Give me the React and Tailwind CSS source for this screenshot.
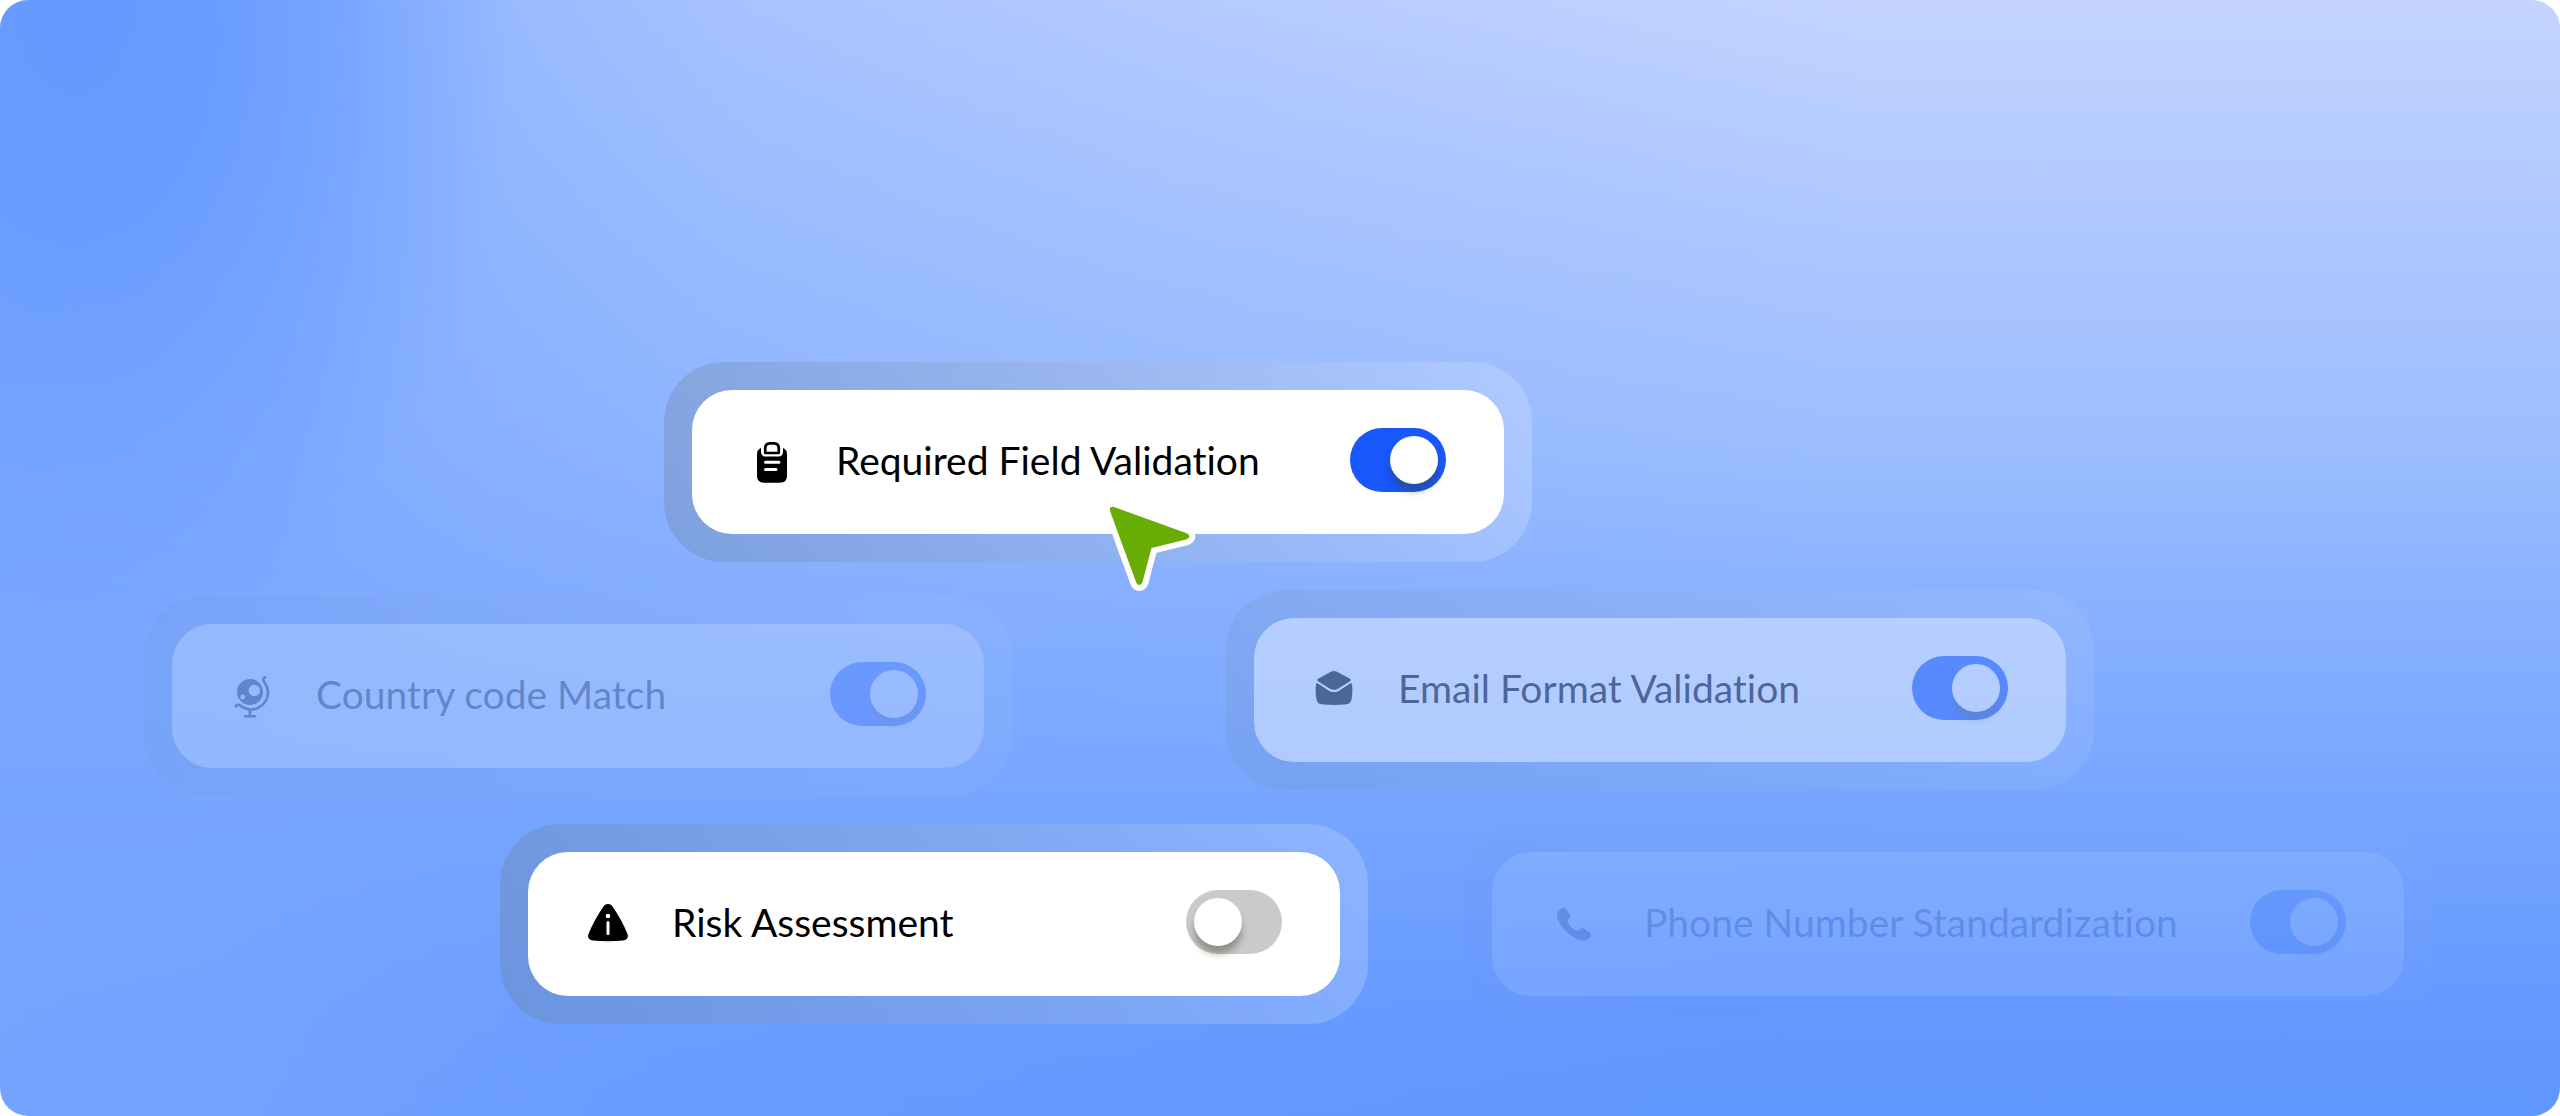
import React from 'react';

const ClipboardIcon = () => (
    <svg viewBox="0 0 48 48" className="size-12 shrink-0" fill="none" aria-hidden="true">
        <path
            d="M13 10v3.500c0 3 1.500 5 4.500 5h13c3 0 4.500-2 4.500-5V10c2.600.900 4 3 4 6.500V37c0 5.500-2.200 7.700-7.500 7.700h-15C11.200 44.700 9 42.500 9 37V16.500C9 13 10.400 10.900 13 10Z"
            fill="currentColor"
        />
        <path d="M17.200 14.500V10.500c0-3.300 1.700-5.100 4.800-5.100h4c3.100 0 4.800 1.800 4.800 5.100v4c0 .300-.200.500-.500.500H17.700c-.300 0-.500-.200-.500-.500Z" stroke="currentColor" strokeWidth="2.700" />
        <path d="M17.500 24.300h13.500M17.500 31.600h10.500" stroke="#fff" strokeWidth="3" strokeLinecap="round" />
    </svg>
);

const GlobeIcon = () => (
    <svg viewBox="0 0 48 48" className="size-12 shrink-0" fill="none" aria-hidden="true">
        <path
            fillRule="evenodd"
            clipRule="evenodd"
            d="M22 7a13 13 0 1 1 0 26a13 13 0 0 1 0-26ZM26.300 12.800a5.700 5.700 0 1 0 0 11.400a5.700 5.700 0 0 0 0-11.400ZM14.700 22.600a2.400 2.400 0 1 0 0 4.800a2.400 2.400 0 0 0 0-4.800Z"
            fill="currentColor"
        />
        <path
            d="M37.300 5.300c-2.200.800-2.800 2.500-1.200 4.400C43.500 20 39.500 32 29 36.200c-6 2.400-12 1-16.500-2.500-1.600-1.300-3.600-1.200-4.700.600M22 38v6M17 44.200h10"
            stroke="currentColor"
            strokeWidth="2.600"
            strokeLinecap="round"
            strokeLinejoin="round"
        />
    </svg>
);

const MailIcon = () => (
    <svg viewBox="0 0 48 48" className="size-12 shrink-0" fill="currentColor" aria-hidden="true">
        <path d="M21 5.800c1.900-1 4.100-1 6 0l12.600 6.600c1.600.900 1.600 2 .100 3.100L28.300 22.500c-2.600 1.600-6 1.600-8.600 0L8.300 15.500c-1.500-1.100-1.500-2.200.100-3.100L21 5.800Z" />
        <path d="M6 18.200c.100-1 .900-1.200 1.900-.600l10.600 6.800c3.400 2.100 7.600 2.100 11 0l10.600-6.800c1-.600 1.700-.400 1.900.600.600 4.300.500 9.300-.200 13.600-.600 4.600-2.300 6.400-7 6.700-7 .500-14.600.500-21.600 0-4.700-.300-6.400-2.100-7-6.700-.700-4.300-.800-9.300-.200-13.600Z" />
    </svg>
);

const WarningIcon = () => (
    <svg viewBox="0 0 48 48" className="size-12 shrink-0" fill="none" aria-hidden="true">
        <path
            d="M19.500 6.500c2.200-3.200 6.800-3.200 9 0C34.500 15 39.500 24 43.300 33.500c1.600 4-.300 6.500-4.300 7-9.900 1-20.100 1-30 0-4-.500-5.900-3-4.300-7C8.500 24 13.500 15 19.500 6.500Z"
            fill="currentColor"
        />
        <circle cx="24" cy="16" r="2.300" fill="#fff" />
        <path d="M24 22.500v11" stroke="#fff" strokeWidth="3" strokeLinecap="round" />
    </svg>
);

const PhoneIcon = () => (
    <svg viewBox="0 0 48 48" className="size-12 shrink-0" fill="currentColor" aria-hidden="true">
        <path d="M13.500 8.300c1.400-1.200 3.200-1 4.200.500l4.300 5.900c.900 1.400.6 2.800-.8 3.900-2.200 1.600-2 2.900-.5 5.200 1.600 2.400 3.800 4.600 6.300 6.200 2 1.300 3.500 1.500 4.900-.7 1.100-1.500 2.500-1.800 4-.9l5.800 4.300c1.500 1 1.700 2.700.5 4.200-3.100 3.900-7.500 4.500-12 2.500C21.500 35.600 13.500 28 9.900 20 8 15.600 9.500 11.300 13.500 8.300Z" />
    </svg>
);

const CursorIcon = () => (
    <svg viewBox="0 0 96 96" className="size-24" aria-hidden="true">
        <path
            d="M8 11C7 8 9 6 12 7L84 33C89 35 88 38 84 39.500L49.500 48L40.500 82C39 86 35.500 86 34 82Z"
            fill="#68ad04"
            stroke="#fff"
            strokeWidth="12"
            strokeLinejoin="round"
            paintOrder="stroke"
        />
    </svg>
);

const RuleCard = ({ id, icon, label, defaultChecked, className = '', gap = 'gap-10' }) => (
    <div className={`min-w-0 rounded-[60px] bg-linear-to-r from-[#667a8c48] to-[#ffffff30] p-7 ${className}`}>
        <div className={`flex h-36 items-center rounded-[40px] bg-white pr-[58px] pl-14 text-black ${gap}`}>
            {icon}
            <label htmlFor={id} className="mb-1 flex-1 whitespace-nowrap text-[39px] leading-12">
                {label}
            </label>
            <input
                id={id}
                type="checkbox"
                role="switch"
                defaultChecked={defaultChecked}
                className="mb-1 h-16 w-24 shrink-0 cursor-pointer appearance-none rounded-full bg-[#cacac9] p-2 before:block before:size-12 before:rounded-full before:bg-white before:shadow-[0_8px_6px_rgba(60,65,50,0.4)] before:content-[''] checked:bg-[#1757fb] checked:before:translate-x-8"
            />
        </div>
    </div>
);

const App = () => {
    return (
        <main className="overflow-hidden rounded-[28px] bg-[radial-gradient(ellipse_17%_60%_at_3%_0%,#6499ff_0%,#6499ffcc_35%,#6499ff59_68%,#6499ff00_100%),linear-gradient(96deg,#78a6ffe0_0%,#78a6ffcc_12%,#78a6ff8c_20%,#78a6ff61_28%,#78a6ff33_45%,#78a6ff00_70%),linear-gradient(180deg,#c5d4ff_0%,#b6cdff_12%,#a9c5ff_25%,#9cbdff_40%,#8fb4ff_50%,#83adff_60%,#79a7ff_70%,#6ea0ff_80%,#6599ff_90%,#6096ff_100%)] pt-[362px] pb-[92px] font-['Lato',sans-serif] [font-variant-ligatures:none]">
            <div className="grid grid-cols-[664fr_868fr_1028fr]">
                <div className="relative col-start-2">
                    <RuleCard id="required-field" icon={<ClipboardIcon />} label="Required Field Validation" defaultChecked />
                    <div className="absolute top-[138px] left-[438px]">
                        <CursorIcon />
                    </div>
                </div>
            </div>
            <div className="mt-7 grid grid-cols-[144fr_868fr_214fr_868fr_466fr] items-start">
                <RuleCard
                    id="country-code"
                    icon={<GlobeIcon />}
                    label="Country code Match"
                    defaultChecked
                    className="col-start-2 mt-1.5 opacity-20"
                />
                <RuleCard
                    id="email-format"
                    icon={<MailIcon />}
                    label="Email Format Validation"
                    defaultChecked
                    className="col-start-4 opacity-40"
                />
            </div>
            <div className="mt-7 grid grid-cols-[500fr_868fr_96fr_968fr_128fr]">
                <RuleCard id="risk" icon={<WarningIcon />} label="Risk Assessment" className="col-start-2" />
                <RuleCard
                    id="phone-number"
                    icon={<PhoneIcon />}
                    label="Phone Number Standardization"
                    defaultChecked
                    className="col-start-4 opacity-10"
                    gap="gap-12"
                />
            </div>
        </main>
    );
};

export default App;
